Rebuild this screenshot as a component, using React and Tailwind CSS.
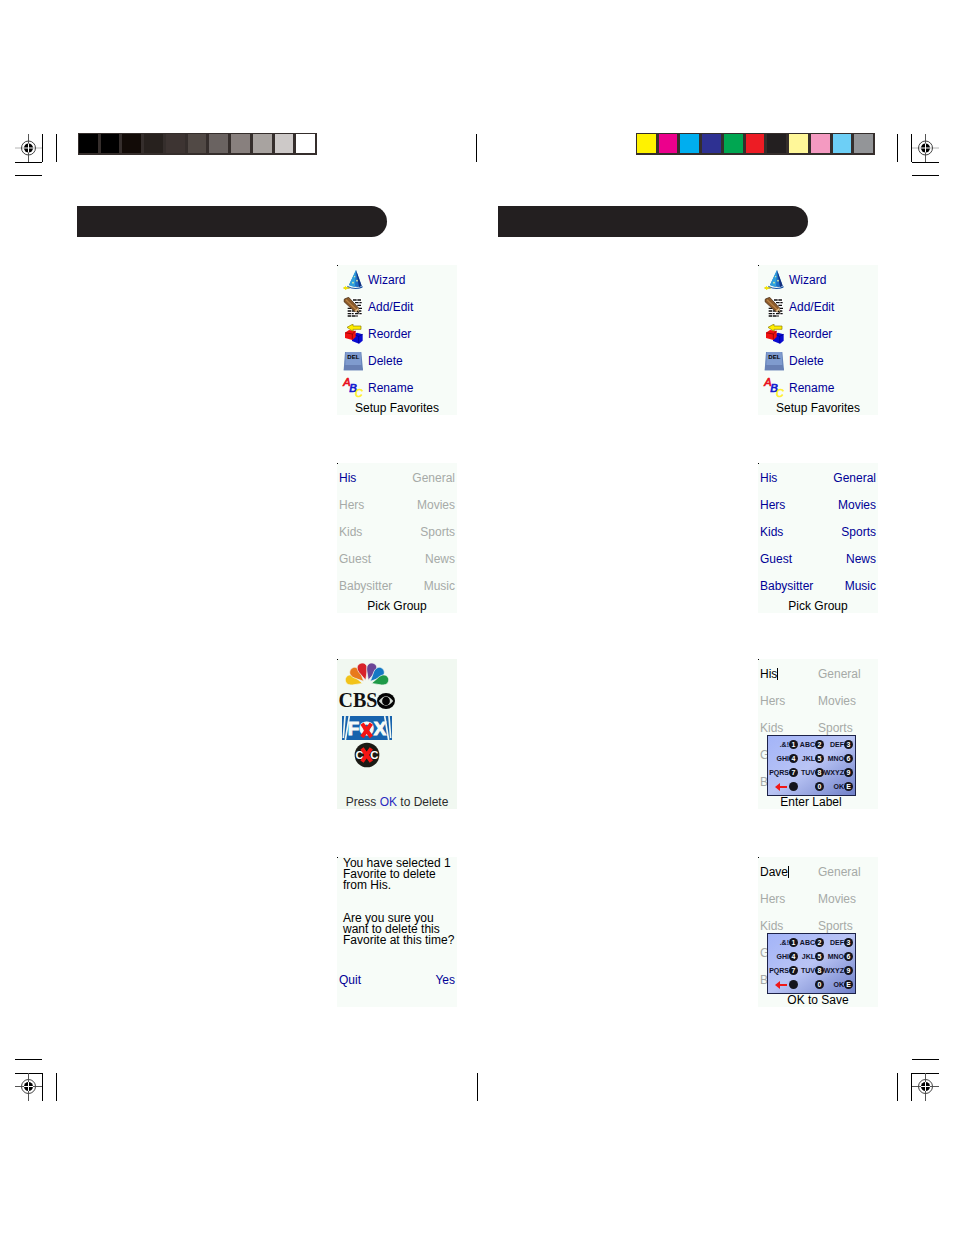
import clsx from "clsx";

const GRAYS = [
  "bg-black",
  "bg-black",
  "bg-[#120b07]",
  "bg-[#27211e]",
  "bg-[#3d3432]",
  "bg-[#514945]",
  "bg-[#6a6361]",
  "bg-[#88807e]",
  "bg-[#a8a3a0]",
  "bg-[#cdc9c8]",
  "bg-white",
];

const INKS = [
  "bg-[#fff200]",
  "bg-[#ec008c]",
  "bg-[#00aeef]",
  "bg-[#2e3192]",
  "bg-[#00a651]",
  "bg-[#ed1c24]",
  "bg-[#231f20]",
  "bg-[#fff799]",
  "bg-[#f49ac1]",
  "bg-[#6dcff6]",
  "bg-[#939598]",
];

const GROUPS = [
  ["His", "General"],
  ["Hers", "Movies"],
  ["Kids", "Sports"],
  ["Guest", "News"],
  ["Babysitter", "Music"],
];

// The keypad covers the lower rows, only their first letters stick out
const ROWS_BEHIND_KEYPAD = [
  ["Hers", "Movies"],
  ["Kids", "Sports"],
  ["G", ""],
  ["B", ""],
];

const KEYS = [
  [".&!", "1"],
  ["ABC", "2"],
  ["DEF", "3"],
  ["GHI", "4"],
  ["JKL", "5"],
  ["MNO", "6"],
  ["PQRS", "7"],
  ["TUV", "8"],
  ["WXYZ", "9"],
  ["back", ""],
  ["", "0"],
  ["OK", "E"],
];

/* ---------- printer marks ---------- */

function SwatchBar({ colors }) {
  return (
    <div className="flex h-[22px] w-[239px] gap-[3px] bg-[#352e2c] pt-px pr-[2px] pb-[2px] pl-px">
      {colors.map((color, index) => (
        <span key={index} className={clsx("flex-1", color)} />
      ))}
    </div>
  );
}

function CornerMarks({ right = false, bottom = false }) {
  const cx = right ? 28.5 : 13.5;
  const cy = bottom ? 27.5 : 14;
  const lineX = right ? [0.5, 14.5] : [27.5, 41.5];
  const lineY = bottom ? [0.5, 14.5] : [28.5, 41.5];
  const top = bottom ? 14 : 0;
  const left = right ? 15 : 0;

  return (
    <svg width="42" height="42" viewBox="0 0 42 42" fill="none" className="shrink-0">
      {lineX.map((x) => (
        <path key={x} d={`M${x} ${top}v28`} stroke="#000" />
      ))}
      {lineY.map((y) => (
        <path key={y} d={`M${left} ${y}h27`} stroke="#000" />
      ))}
      <path d={`M${cx} ${top}v28`} stroke="#555" />
      <path d={`M${left} ${cy}h27`} stroke={bottom ? "#555" : "#b4b4b4"} />
      <circle cx={cx} cy={cy} r="7" stroke="#444" />
      <circle cx={cx} cy={cy} r="4.5" fill="#000" />
      <path d={`M${cx} ${cy - 4.5}v9M${cx - 4.5} ${cy}h9`} stroke="#fff" />
    </svg>
  );
}

/* ---------- menu icons ---------- */

function WizardIcon() {
  return (
    <svg width="20" height="20" viewBox="0 0 60 60">
      <path d="M39 0 56 47Q45 56 18 45Z" fill="#1f6fc4" />
      <path d="M39 0 36 50Q26 50 18 45Z" fill="#2fa0dc" />
      <path d="M39 0 56 47 48 51Z" fill="#14307e" />
      <path d="M12 47Q38 60 59 48L58 53Q36 62 14 52Z" fill="#1c56a6" />
      <g fill="#e8f4a0">
        <circle cx="35" cy="20" r="2" />
        <circle cx="42" cy="32" r="2.5" />
        <circle cx="30" cy="38" r="2.5" />
      </g>
      <path d="M2 54h18" stroke="#b8a800" strokeWidth="4" />
      <path d="m7 47 3 5 6 1-5 4-3 4-3-5-5-2 5-3Z" fill="#f4e400" />
    </svg>
  );
}

function EditIcon() {
  return (
    <svg width="20" height="20" viewBox="0 0 60 60">
      <path d="M16 4h41v54H14Z" fill="#fff" />
      <path
        d="M30 9h26M36 17h20M43 25h13M14 34h14M46 34h11M14 42h22M44 42h13M14 50h18M36 50h20M14 57h30"
        stroke="#111"
        strokeWidth="4"
        strokeDasharray="11 2"
      />
      <path d="M4 6 17 1 46 32 48 46 34 43 3 14Z" fill="#8b5a2b" stroke="#3b2410" strokeWidth="2" />
      <path d="M9 8 40 38" stroke="#b98346" strokeWidth="4" />
      <path d="M46 32 48 46 34 43Z" fill="#e2bf8c" />
      <path d="m44 40 5 7-8-2Z" fill="#000" />
    </svg>
  );
}

function ReorderIcon() {
  return (
    <svg width="20" height="20" viewBox="0 0 60 60">
      <path d="M27 33 42 26 59 31V50L48 59 27 51Z" fill="#0a0ad0" />
      <path d="M31 31 47 37 59 31M47 37V58" stroke="#00007a" strokeWidth="2" fill="none" />
      <path d="M6 26 18 18 38 21V39L28 48 6 42Z" fill="#f01010" />
      <path d="M6 26 28 30 38 21M28 30V46" stroke="#7a0000" strokeWidth="2" fill="none" />
      <path d="M12 10 30 0V6H54V16H30V22Z" fill="#ffee00" stroke="#8a7c00" strokeWidth="2" />
    </svg>
  );
}

function DeleteIcon() {
  return (
    <svg width="20" height="20" viewBox="0 0 60 60">
      <path d="M6 3H55L60 58H2Z" fill="#6482b8" />
      <path d="M8 3H53L55 42H7Z" fill="#7f9bce" />
      <path d="M7 42H55L60 58H2Z" fill="#6880b4" />
      <text x="31" y="23" textAnchor="middle" fontFamily="Liberation Sans, sans-serif" fontSize="18" fontWeight="700">
        DEL
      </text>
    </svg>
  );
}

function RenameIcon() {
  return (
    <svg
      width="20"
      height="20"
      viewBox="0 0 60 60"
      fontFamily="Liberation Sans, sans-serif"
      fontStyle="italic"
      strokeWidth="2"
      className="overflow-visible"
    >
      <text x="1" y="25" fontSize="33" fill="#e81020" stroke="#e81020">
        A
      </text>
      <text x="19" y="42" fontSize="34" fill="#1018d0" stroke="#1018d0">
        B
      </text>
      <text x="36" y="58" fontSize="32" fill="#fff030" stroke="#fff030">
        C
      </text>
    </svg>
  );
}

const MENU = [
  ["Wizard", WizardIcon],
  ["Add/Edit", EditIcon],
  ["Reorder", ReorderIcon],
  ["Delete", DeleteIcon],
  ["Rename", RenameIcon],
];

/* ---------- channel logos ---------- */

function PeacockLogo() {
  const feathers = [
    [-74, "#f2c31a"],
    [-45, "#e87a1c"],
    [-16, "#d8232a"],
    [16, "#6b4596"],
    [45, "#1478c4"],
    [74, "#1f9a48"],
  ];
  return (
    <svg width="42" height="24" viewBox="0 0 126 72" className="overflow-visible">
      {feathers.map(([angle, color]) => (
        <path
          key={angle}
          d="M0-14L-13-42C-19-58-10-67 0-67S19-58 13-42Z"
          fill={color}
          stroke="#f1f8f1"
          strokeWidth="2"
          transform={`translate(63 68) rotate(${angle})`}
        />
      ))}
    </svg>
  );
}

function CbsLogo() {
  return (
    <div className="flex items-center">
      <span className="font-['Liberation_Serif',serif] text-[20px] leading-[27px] font-bold text-[#111]">CBS</span>
      <svg width="18" height="16" viewBox="0 0 60 48" preserveAspectRatio="none" className="shrink-0">
        <ellipse cx="30" cy="24" rx="30" ry="24" fill="#050505" />
        <path d="M6 24Q30-4 54 24Q30 52 6 24Z" fill="#d4dad4" />
        <circle cx="30" cy="24" r="13" fill="#050505" />
      </svg>
    </div>
  );
}

function RedX({ x, y }) {
  return (
    <path
      d={`M${x - 14} ${y - 20}L${x + 14} ${y + 20}M${x + 14} ${y - 20}L${x - 14} ${y + 20}`}
      stroke="#f51414"
      strokeWidth="12"
    />
  );
}

function FoxLogo() {
  return (
    <svg width="50" height="24" viewBox="0 0 150 72">
      <path d="M0 0H150V72H0Z" fill="#1763ad" />
      <path d="M9 0 4 66M22 0 10 72M141 0 146 66M128 0 140 72" stroke="#f1f8f1" strokeWidth="5" />
      <text x="75" y="58" textAnchor="middle" fontFamily="Liberation Sans, sans-serif" fontSize="56" fontWeight="700" fill="#f7fbf7" stroke="#f7fbf7" strokeWidth="3">
        FOX
      </text>
      <RedX x={74} y={43} />
    </svg>
  );
}

function RoundLogo() {
  return (
    <svg width="26" height="26" viewBox="0 0 78 78" fontFamily="Liberation Sans, sans-serif" fontSize="34" fontWeight="700">
      <circle cx="39" cy="39" r="37" fill="#1b1a14" />
      <text x="17" y="50" textAnchor="middle" fill="#fff">
        C
      </text>
      <text x="61" y="50" textAnchor="middle" fill="#fff">
        C
      </text>
      <RedX x={38} y={39} />
    </svg>
  );
}

/* ---------- remote screens ---------- */

function Screen({ title, titleClass, className, children }) {
  return (
    <section
      className={clsx(
        "relative flex h-[150px] w-[120px] flex-col pt-px before:absolute before:top-0 before:left-0 before:size-px before:bg-black",
        className || "bg-[#f7fcf8]"
      )}
    >
      {children}
      {title && <h3 className={clsx("text-center leading-[14px]", titleClass)}>{title}</h3>}
    </section>
  );
}

function SetupScreen() {
  return (
    <Screen title="Setup Favorites">
      {MENU.map(([label, Icon]) => (
        <button key={label} type="button" className="flex h-[27px] items-center gap-[5px] pl-1.5 text-[#000096]">
          <Icon />
          {label}
        </button>
      ))}
    </Screen>
  );
}

function PickGroupScreen({ onlyFirst = false }) {
  return (
    <Screen title="Pick Group">
      {GROUPS.map((row, r) => (
        <div key={row[0]} className="flex h-[27px] items-center justify-between px-[2px]">
          {row.map((name, c) => (
            <button
              key={name}
              type="button"
              disabled={onlyFirst && r + c > 0}
              className="text-[#000096] disabled:text-[#a6aaa7]"
            >
              {name}
            </button>
          ))}
        </div>
      ))}
    </Screen>
  );
}

function DeleteScreen() {
  return (
    <Screen
      className="bg-[#f1f8f1]"
      titleClass="text-[#2c2c2c]"
      title={
        <>
          Press <span className="text-[#2a2ac0]">OK</span> to Delete
        </>
      }
    >
      <div className="grid h-[135px] w-[60px] auto-rows-[27px] place-items-center">
        <PeacockLogo />
        <CbsLogo />
        <FoxLogo />
        <RoundLogo />
      </div>
    </Screen>
  );
}

function ConfirmScreen() {
  return (
    <Screen>
      <div className="flex h-[108px] flex-col gap-[22px] pl-1.5 leading-[11px] whitespace-nowrap">
        <p>
          You have selected 1
          <br />
          Favorite to delete
          <br />
          from His.
        </p>
        <p>
          Are you sure you
          <br />
          want to delete this
          <br />
          Favorite at this time?
        </p>
      </div>
      <div className="flex h-[27px] items-center justify-between px-[2px] text-[#000096]">
        <button type="button">Quit</button>
        <button type="button">Yes</button>
      </div>
    </Screen>
  );
}

function Keypad() {
  return (
    <div className="absolute top-[76px] left-[9px] grid h-[61px] w-[89px] grid-cols-[30px_26px_29px] grid-rows-4 border border-[#1c2248] bg-linear-to-br from-[#a3b4f8] via-[#b9c4f4] to-[#7080c8] py-px text-[7px] leading-[9px] font-bold text-[#10122c]">
      {KEYS.map(([label, digit], index) => (
        <button key={index} type="button" aria-label={label || digit} className="flex items-center justify-end">
          {label === "back" ? (
            <svg width="12" height="8" viewBox="0 0 12 8" className="mr-[2px] shrink-0">
              <path d="M0 4 5 0V3H12V5H5V8Z" fill="#f01818" />
            </svg>
          ) : (
            <span>{label}</span>
          )}
          <span className="size-[9px] shrink-0 rounded-full bg-[#14141c] text-center text-white">{digit}</span>
        </button>
      ))}
    </div>
  );
}

function LabelScreen({ value, title, titleClass }) {
  const rowClass = "grid h-[27px] grid-cols-[58px_1fr] items-center px-[2px] text-[#a6aaa7]";

  return (
    <Screen title={title} titleClass={titleClass}>
      <div className={rowClass}>
        <div className="flex items-center text-black">
          <input aria-label="Group label" defaultValue={value} className="field-sizing-content outline-none" />
          <span className="h-3 w-px bg-black" />
        </div>
        <span>General</span>
      </div>
      {ROWS_BEHIND_KEYPAD.map(([left, right]) => (
        <div key={left} className={rowClass}>
          <span>{left}</span>
          <span>{right}</span>
        </div>
      ))}
      <Keypad />
    </Screen>
  );
}

function ManualPage({ children }) {
  return (
    <article className="flex flex-col gap-7">
      <div className="h-[31px] w-[310px] rounded-r-full bg-[#231f20]" />
      <div className="flex flex-col items-end gap-[46px]">{children}</div>
    </article>
  );
}

export default function App() {
  return (
    <main className="min-h-screen bg-white font-['Liberation_Sans',sans-serif] text-[12px] text-black">
      <header className="flex items-start px-[15px] pt-[133px]">
        <div className="pt-px">
          <CornerMarks />
        </div>
        <div className="mr-[22px] ml-[21px] flex flex-1 items-start justify-between">
          <SwatchBar colors={GRAYS} />
          <span className="mt-px h-7 w-px bg-black" />
          <SwatchBar colors={INKS} />
        </div>
        <div className="pt-px">
          <CornerMarks right />
        </div>
      </header>

      <div className="grid grid-cols-2 gap-[41px] pt-[30px] pr-[76px] pb-[52px] pl-[77px]">
        <ManualPage>
          <div className="flex flex-col gap-12">
            <SetupScreen />
            <PickGroupScreen onlyFirst />
          </div>
          <div className="flex flex-col gap-12">
            <DeleteScreen />
            <ConfirmScreen />
          </div>
        </ManualPage>
        <ManualPage>
          <div className="flex flex-col gap-12">
            <SetupScreen />
            <PickGroupScreen />
          </div>
          <div className="flex flex-col gap-12">
            <LabelScreen value="His" title="Enter Label" titleClass="pr-3.5" />
            <LabelScreen value="Dave" title="OK to Save" />
          </div>
        </ManualPage>
      </div>

      <footer className="flex items-end justify-between px-[15px]">
        <CornerMarks bottom />
        <span className="h-7 w-px bg-black" />
        <CornerMarks right bottom />
      </footer>
    </main>
  );
}
